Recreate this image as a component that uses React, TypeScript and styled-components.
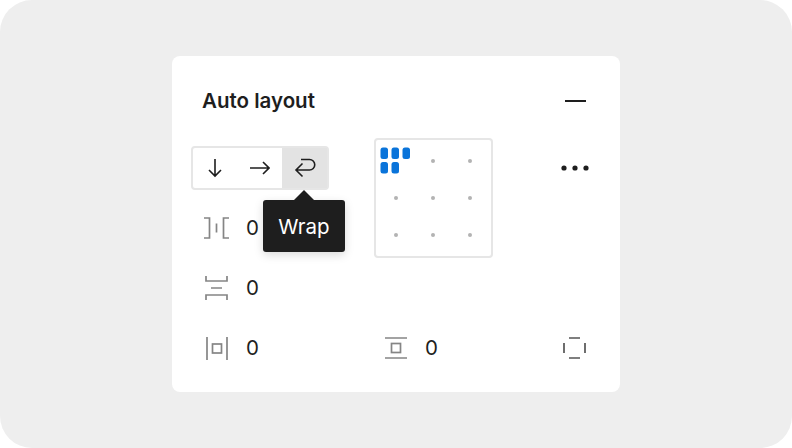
import React from "react";
import styled, { createGlobalStyle } from "styled-components";

const Global = createGlobalStyle`
  html, body { margin: 0; padding: 0; background: #fff; }
  body { width: 792px; height: 448px; overflow: hidden; font-family: Inter, "Liberation Sans", sans-serif; }
`;

const Stage = styled.div`
  width: 792px;
  height: 448px;
  box-sizing: border-box;
  background: #eeeeee;
  border-radius: 32px;
  display: flex;
  align-items: center;
  justify-content: center;
`;

const Panel = styled.section`
  width: 448px;
  height: 336px;
  box-sizing: border-box;
  background: #fff;
  border-radius: 8px;
  padding: 30px 30px 0 19px;
  display: flex;
  flex-direction: column;
`;

const Header = styled.header`
  display: flex;
  align-items: center;
  justify-content: space-between;
  height: 30px;
  padding: 0 4px 0 11px;
`;

const Title = styled.h2`
  margin: 0 0 2px;
  font-size: 20.5px;
  font-weight: 600;
  color: #1e1e1e;
`;

const Body = styled.div`
  display: grid;
  grid-template-columns: 183px 119px 97px;
  grid-template-rows: 60px 60px 60px 60px;
  margin-top: 22px;
`;

const Cell = styled.div`
  display: flex;
  align-items: center;
  position: relative;
`;

const AlignColumn = styled(Cell)`
  grid-row: span 2;
  align-items: flex-start;
`;

const Segmented = styled.div`
  display: flex;
  width: 138px;
  height: 44px;
  box-sizing: border-box;
  border: 2px solid #e6e6e6;
  border-radius: 4px;
  background: #fff;
`;

const SegButton = styled.button<{ $active?: boolean }>`
  width: 44.5px;
  flex: none;
  padding: 0;
  border: 0;
  display: flex;
  align-items: center;
  justify-content: center;
  background: ${(p) => (p.$active ? "#e3e3e3" : "transparent")};
  color: #1e1e1e;
  &:last-child { flex: 1; }
`;

const Tooltip = styled.div`
  position: absolute;
  left: 72px;
  top: 62px;
  width: 82px;
  height: 52px;
  border-radius: 3px;
  background: #1e1e1e;
  color: #fff;
  font-size: 20.5px;
  display: flex;
  align-items: center;
  justify-content: center;
  box-shadow: 0 3px 10px rgba(0, 0, 0, 0.15);
  &::before {
    content: "";
    position: absolute;
    left: 31px;
    top: -10px;
    border-left: 10px solid transparent;
    border-right: 10px solid transparent;
    border-bottom: 10px solid #1e1e1e;
  }
`;

const Align = styled.div`
  width: 119px;
  height: 120px;
  box-sizing: border-box;
  border: 2px solid #e6e6e6;
  border-radius: 4px;
  display: grid;
  grid-template-columns: repeat(3, 37.4px);
  grid-template-rows: repeat(3, 37.4px);
  padding: 2px 1px;
  align-self: start;
`;

const AlignCell = styled.div`
  display: flex;
  align-items: center;
  justify-content: center;
`;

const Dot = styled.span`
  width: 4px;
  height: 4px;
  border-radius: 50%;
  background: #b3b3b3;
`;

const Field = styled.div<{ $compact?: boolean }>`
  display: flex;
  align-items: center;
  gap: 17px;
  padding-left: ${(p) => (p.$compact ? "9px" : "13px")};
  color: #1e1e1e;
`;

const IconSlot = styled.span`
  width: 25px;
  height: 26px;
  display: flex;
  align-items: center;
  justify-content: center;
`;

const Value = styled.span`
  font-size: 20.5px;
  color: #1e1e1e;
  padding-bottom: 2px;
`;

const RightIcon = styled.div<{ $inset: number }>`
  display: flex;
  justify-content: flex-end;
  align-items: center;
  width: 100%;
  padding-right: ${(p) => p.$inset}px;
  box-sizing: border-box;
`;

const G = "#858585";

const ArrowDown = () => (
  <svg width="14" height="20" viewBox="0 0 14 20" fill="none" stroke="#1e1e1e" strokeWidth="1.6">
    <path d="M7 1v17M1 12l6 6 6-6" />
  </svg>
);
const ArrowRight = () => (
  <svg width="20" height="14" viewBox="0 0 20 14" fill="none" stroke="#1e1e1e" strokeWidth="1.6">
    <path d="M0 7h19M13 1l6 6-6 6" />
  </svg>
);
const WrapIcon = () => (
  <svg width="22" height="20" viewBox="0 0 22 20" fill="none" stroke="#1e1e1e" strokeWidth="1.6">
    <path d="M7 1.500h8.500a5.200 5.200 0 0 1 0 10.500H2.500M8.500 5.500L2 12l6.500 6.500" />
  </svg>
);
const Minus = () => (
  <svg width="21" height="4" viewBox="0 0 21 4" fill="none" stroke="#1e1e1e" strokeWidth="2">
    <path d="M0 2h21" />
  </svg>
);
const More = () => (
  <svg width="30" height="8" viewBox="0 0 30 8" fill="#1e1e1e">
    <circle cx="4" cy="4" r="2.6" />
    <circle cx="15" cy="4" r="2.6" />
    <circle cx="26" cy="4" r="2.6" />
  </svg>
);
const Blue = () => (
  <svg width="31" height="27" viewBox="0 0 31 27" fill="#0a74da">
    <rect x="0.500" y="0.500" width="7.500" height="11.500" rx="2.500" />
    <rect x="11.500" y="0.500" width="7.500" height="11.500" rx="2.500" />
    <rect x="22.500" y="0.500" width="7.500" height="11.500" rx="2.500" />
    <rect x="0.500" y="15" width="7.500" height="11.500" rx="2.500" />
    <rect x="11.500" y="15" width="7.500" height="11.500" rx="2.500" />
  </svg>
);
const GapH = () => (
  <svg width="25" height="22" viewBox="0 0 25 22" fill="none" stroke={G} strokeWidth="1.700">
    <path d="M0 1h5.500v20H0M25 1h-5.500v20H25M12.500 6.500v9" />
  </svg>
);
const GapV = () => (
  <svg width="23" height="24" viewBox="0 0 23 24" fill="none" stroke={G} strokeWidth="1.700">
    <path d="M1 0v5h21V0M1 24v-5h21v5M6 12h11" />
  </svg>
);
const PadH = () => (
  <svg width="22" height="23" viewBox="0 0 22 23" fill="none" stroke={G} strokeWidth="1.700">
    <path d="M1 0v23M21 0v23" />
    <rect x="6.500" y="7" width="9" height="9" />
  </svg>
);
const PadV = () => (
  <svg width="22" height="22" viewBox="0 0 22 22" fill="none" stroke={G} strokeWidth="1.700">
    <path d="M0 1h22M0 21h22" />
    <rect x="6.500" y="6.500" width="9" height="9" />
  </svg>
);
const PadAll = () => (
  <svg width="23" height="22" viewBox="0 0 23 22" fill="none" stroke="#555" strokeWidth="1.700">
    <path d="M6 1h11M6 21h11M1 6v10M22 6v10" />
  </svg>
);

export default function App() {
  return (
    <>
      <Global />
      <Stage>
        <Panel>
          <Header>
            <Title>Auto layout</Title>
            <Minus />
          </Header>
          <Body>
            <Cell>
              <Segmented>
                <SegButton><ArrowDown /></SegButton>
                <SegButton><ArrowRight /></SegButton>
                <SegButton $active><WrapIcon /></SegButton>
              </Segmented>
              <Tooltip>Wrap</Tooltip>
            </Cell>
            <AlignColumn>
              <Align>
                <AlignCell><Blue /></AlignCell>
                {Array.from({ length: 8 }, (_, i) => (
                  <AlignCell key={i}><Dot /></AlignCell>
                ))}
              </Align>
            </AlignColumn>
            <Cell>
              <RightIcon $inset={0}><More /></RightIcon>
            </Cell>
            <Cell>
              <Field><IconSlot><GapH /></IconSlot><Value>0</Value></Field>
            </Cell>
            <Cell />
            <Cell>
              <Field><IconSlot><GapV /></IconSlot><Value>0</Value></Field>
            </Cell>
            <Cell />
            <Cell />
            <Cell>
              <Field><IconSlot><PadH /></IconSlot><Value>0</Value></Field>
            </Cell>
            <Cell>
              <Field $compact><IconSlot><PadV /></IconSlot><Value>0</Value></Field>
            </Cell>
            <Cell>
              <RightIcon $inset={4}><PadAll /></RightIcon>
            </Cell>
          </Body>
        </Panel>
      </Stage>
    </>
  );
}
